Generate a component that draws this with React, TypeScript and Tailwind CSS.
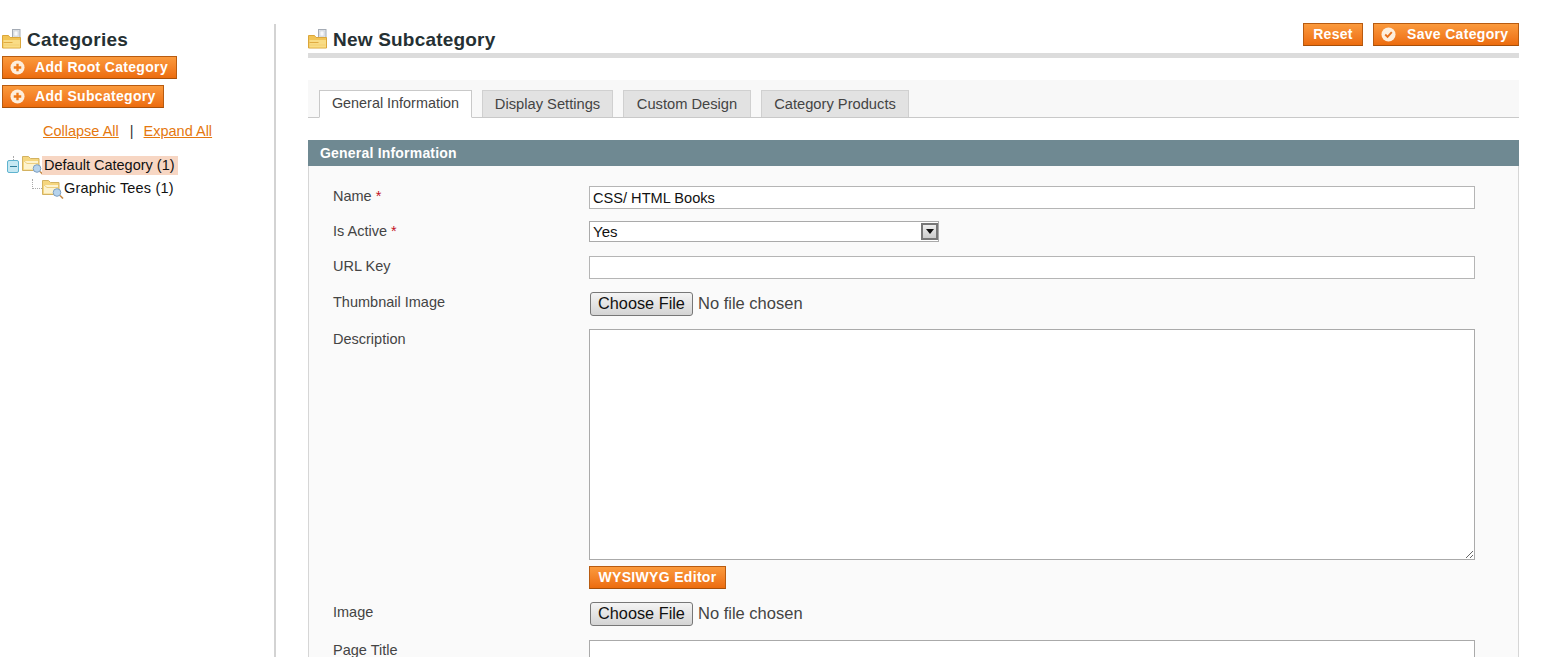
import type { ReactNode } from "react";

function FolderIcon({ className }: { className?: string }) {
  return (
    <svg viewBox="0 0 20 20" className={className}>
      <rect x="10.500" y="0.500" width="7.500" height="12" fill="#e1e5ea" stroke="#a4abb5" />
      <rect x="12" y="2" width="4" height="5" fill="#f7f8fa" stroke="#c2c7ce" strokeWidth="0.500" />
      <path d="M0.500 6.500h6l1.500 2h10.500v10.500H0.500z" fill="#f2c455" stroke="#dba63a" />
      <path d="M1.500 11h16.500v7.500H1.500z" fill="#f9dc85" />
      <path d="M1.500 13.500h9" stroke="#e0ab42" />
      <path d="M1.500 16h16" stroke="#f4cf70" />
    </svg>
  );
}

function TreeFolder({ className }: { className?: string }) {
  return (
    <svg viewBox="0 0 22 20" className={className}>
      <path d="M0.500 1.500h6l2 2h8.500v12H0.500z" fill="#f5d67f" stroke="#d3b261" />
      <path d="M2 6h14v8.500H2z" fill="#fdf3cf" />
      <path d="M2 6l3 2.500h11" stroke="#eccf82" fill="none" />
      <circle cx="15" cy="13.500" r="3.800" fill="#b6d3ec" stroke="#7c9fc2" />
      <path d="M18 16.500l3 3" stroke="#c48b49" strokeWidth="1.600" />
    </svg>
  );
}

function OrangeButton({
  label,
  icon,
  className,
}: {
  label: string;
  icon?: "plus" | "check";
  className?: string;
}) {
  return (
    <button
      type="button"
      className={`flex items-center h-[23px] border border-[#b85b10] border-b-[#a64f0a] bg-gradient-to-b from-[#fb9a3c] to-[#ec6c0c] text-white font-bold text-[14px] tracking-[0.32px] ${className ?? ""}`}
    >
      {icon === "plus" && (
        <svg viewBox="0 0 16 16" className="w-[15px] h-[15px] ml-[7px] mr-[10px]">
          <circle cx="8" cy="8" r="7.500" fill="#fdeedd" />
          <path d="M8 4v8M4 8h8" stroke="#ee7a1a" strokeWidth="2.500" />
        </svg>
      )}
      {icon === "check" && (
        <svg viewBox="0 0 16 16" className="w-[15px] h-[15px] ml-[7px] mr-[11px]">
          <circle cx="8" cy="8" r="7.500" fill="#fdeedd" />
          <path d="M4.500 8l2.500 2.500 4.500-5" stroke="#e8701a" strokeWidth="2" fill="none" />
        </svg>
      )}
      {label}
    </button>
  );
}

function FileField() {
  return (
    <div className="flex items-center h-[24px] text-[16.500px] text-[#444]">
      <button
        type="button"
        className="ml-[1px] w-[103px] h-[24px] pb-[2px] rounded-[3px] border border-[#777] bg-gradient-to-b from-[#f4f4f4] to-[#d4d4d4] text-[#111] text-[16.300px] leading-none"
      >
        Choose File
      </button>
      <span className="ml-[5px] -mt-[1px]">No file chosen</span>
    </div>
  );
}

function Row({
  label,
  required,
  className,
  children,
}: {
  label: string;
  required?: boolean;
  className?: string;
  children: ReactNode;
}) {
  return (
    <div className={`flex ${className ?? ""}`}>
      <div className="w-[256px] shrink-0 text-[14.500px] text-[#444] leading-[20px]">
        {label}
        {required && <span className="text-[#c3121f] ml-[4px]">*</span>}
      </div>
      <div className="flex-1">{children}</div>
    </div>
  );
}

const tabs = [
  { name: "General Information", width: "w-[153px]" },
  { name: "Display Settings", width: "w-[131px]" },
  { name: "Custom Design", width: "w-[128px]" },
  { name: "Category Products", width: "w-[148px]" },
];

export default function App() {
  return (
    <div className="h-screen overflow-hidden bg-white flex font-['Liberation_Sans',Arial,sans-serif] text-[#2f2f2f]">
      {/* left column */}
      <aside className="w-[276px] shrink-0 mt-[24px] border-r-2 border-[#d3d3d3] pl-[2px]">
        <div className="flex items-center h-[32px]">
          <FolderIcon className="w-[20px] h-[20px] mr-[5px] -mt-[3px]" />
          <h3 className="text-[19px] font-bold text-[#253033] tracking-[0.3px]">Categories</h3>
        </div>
        <OrangeButton label="Add Root Category" icon="plus" className="w-[175px]" />
        <OrangeButton label="Add Subcategory" icon="plus" className="w-[162px] mt-[6px]" />
        <div className="flex ml-[41px] mt-[14px] text-[14.500px] leading-[18px]">
          <a className="text-[#e5780f] underline">Collapse All</a>
          <span className="ml-[11px] mr-[10px] text-[#333]">|</span>
          <a className="text-[#e5780f] underline">Expand All</a>
        </div>
        <div className="mt-[15px] text-[14.500px] text-[#111]">
          <div className="flex items-center h-[20px] ml-[5px]">
            <span className="relative w-[12px] h-[13px] mt-[3px] rounded-[2px] border border-[#5fb3cf] bg-[#c6e8f2] flex items-center justify-center">
              <span className="w-[7px] h-[1px] bg-[#2f7f9c]" />
              <span className="absolute left-[5px] -top-[5px] h-[4px] border-l border-dotted border-[#aaa]" />
            </span>
            <TreeFolder className="w-[22px] h-[20px] ml-[3px] -mt-[1px] shrink-0" />
            <span className="bg-[#f7d6c3] pl-[2px] pr-[3px] leading-[19px] -ml-[2px]">Default Category (1)</span>
          </div>
          <div className="flex items-center h-[20px] mt-[4px] ml-[30px]">
            <span className="w-[10px] h-[10px] -mt-[10px] border-l border-b border-dotted border-[#aaa]" />
            <TreeFolder className="w-[22px] h-[20px] shrink-0" />
            <span className="tracking-[0.17px]">Graphic Tees (1)</span>
          </div>
        </div>
      </aside>

      {/* main column */}
      <main className="ml-[32px] w-[1211px] shrink-0">
        <div className="h-[34px] mt-[24px] flex items-start justify-between">
          <div className="flex items-center h-[32px]">
            <FolderIcon className="w-[20px] h-[20px] mr-[5px] -mt-[3px]" />
            <h3 className="text-[19px] font-bold text-[#253033] tracking-[0.2px]">New Subcategory</h3>
          </div>
          <div className="flex -mt-[1px]">
            <OrangeButton label="Reset" className="w-[60px] justify-center" />
            <OrangeButton label="Save Category" icon="check" className="w-[146px] ml-[10px]" />
          </div>
        </div>
        <div className="h-[5px] bg-[#dcdcdc] -mt-[5px]" />

        <div className="mt-[22px] h-[38px] bg-[#f8f8f8] border-b border-[#c9c9c9] flex items-end pl-[11px] gap-[10px]">
          {tabs.map((tab, i) => (
            <div
              key={tab.name}
              className={
                i === 0
                  ? `${tab.width} h-[28px] -mb-[1px] bg-white border border-[#c9c9c9] border-b-white flex items-center justify-center text-[14.400px] text-[#444]`
                  : `${tab.width} h-[27px] bg-[#e2e2e2] border border-b-0 border-[#d0d0d0] flex items-center justify-center text-[14.700px] text-[#444]`
              }
            >
              {tab.name}
            </div>
          ))}
        </div>

        <div className="mt-[22px] h-[26px] bg-[#6f8992] px-[12px] flex items-center text-white font-bold text-[14px] tracking-[0.2px]">
          General Information
        </div>
        <div className="h-[600px] bg-[#fafafa] border-x border-[#d6d6d6] pl-[24px] pt-[20px]">
          <Row label="Name" required>
            <input
              defaultValue="CSS/ HTML Books"
              className="block w-[886px] h-[23px] bg-white border border-[#b5b5b5] px-[3px] text-[14.600px] text-[#111] outline-none"
            />
          </Row>
          <Row label="Is Active" required className="mt-[12px]">
            <div className="w-[350px] h-[21px] bg-white border border-[#aaa] flex items-center justify-between text-[15px] text-[#111] pl-[3px]">
              <span className="pt-[1px]">Yes</span>
              <span className="w-[17px] h-[17px] border-2 border-[#777] bg-gradient-to-b from-[#eee] to-[#ccc] flex items-center justify-center">
                <svg viewBox="0 0 8 5" className="w-[8px] h-[5px]">
                  <path d="M0 0h8L4 5z" fill="#111" />
                </svg>
              </span>
            </div>
          </Row>
          <Row label="URL Key" className="mt-[14px]">
            <input className="block w-[886px] h-[23px] bg-white border border-[#b5b5b5] outline-none" />
          </Row>
          <Row label="Thumbnail Image" className="mt-[13px]">
            <FileField />
          </Row>
          <Row label="Description" className="mt-[13px]">
            <textarea className="block w-[886px] h-[231px] bg-white border border-[#aaa] outline-none" />
            <OrangeButton label="WYSIWYG Editor" className="w-[137px] justify-center mt-[6px]" />
          </Row>
          <Row label="Image" className="mt-[13px]">
            <FileField />
          </Row>
          <Row label="Page Title" className="mt-[14px]">
            <input className="block w-[886px] h-[23px] bg-white border border-[#aaa] outline-none" />
          </Row>
        </div>
      </main>
    </div>
  );
}
